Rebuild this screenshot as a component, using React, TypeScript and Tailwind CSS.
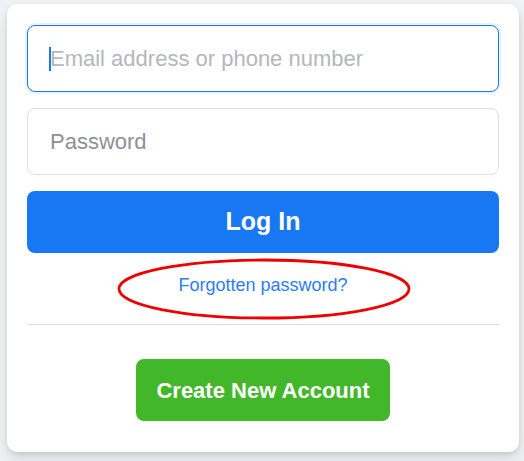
export default function App() {
  return (
    <div
      className="min-h-[461px] w-full bg-[#f0f2f5] pt-[4px] pl-[7px]"
      style={{ fontFamily: '"Liberation Sans", Arial, sans-serif' }}
    >
      <div className="relative w-[512px] rounded-[10px] bg-white px-[20px] pt-[21px] pb-[31px] shadow-[0_2px_4px_rgba(0,0,0,0.1),0_8px_16px_rgba(0,0,0,0.1)]">
        {/* Login form */}
        <div className="flex flex-col gap-[16px]">
          <div className="relative">
            <input
              type="text"
              placeholder="Email address or phone number"
              className="h-[67px] w-full rounded-[8px] border border-[#1877f2] px-[22px] text-[22px] text-[#1c1e21] shadow-[0_0_0_2px_#e7f3ff] outline-none placeholder:text-[#b4b7bc]"
            />
            <span className="absolute left-[22px] top-[22px] h-[24px] w-[2px] bg-[#1877f2]" />
          </div>
          <input
            type="password"
            placeholder="Password"
            className="h-[67px] w-full rounded-[8px] border border-[#dddfe2] px-[22px] text-[22px] text-[#1c1e21] outline-none placeholder:text-[#8d9096]"
          />
          <button className="h-[62px] w-full rounded-[8px] bg-[#1877f2] text-[25px] font-bold text-white">
            Log In
          </button>
        </div>

        {/* Forgotten password */}
        <div className="relative mt-[20px] flex justify-center">
          <a href="#" className="text-[18px] leading-[24px] text-[#2a7ef4]">
            Forgotten password?
          </a>
          <svg
            className="pointer-events-none absolute left-[89px] top-[-15px]"
            width="296"
            height="64"
            viewBox="0 0 296 64"
          >
            <ellipse cx="148" cy="31" rx="145" ry="29" fill="none" stroke="#ee0000" strokeWidth="2.8" />
          </svg>
        </div>

        <div className="mt-[27px] h-px bg-[#dadde1]" />

        <div className="mt-[34px] flex justify-center">
          <button className="h-[62px] rounded-[8px] bg-[#42b72a] px-[20px] text-[22px] font-bold text-white">
            Create New Account
          </button>
        </div>
      </div>
    </div>
  );
}
